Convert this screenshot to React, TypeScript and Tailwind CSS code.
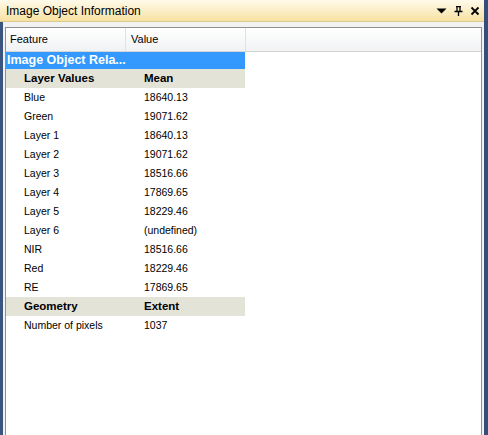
import React from "react";

const rows: [string, string][] = [
  ["Blue", "18640.13"],
  ["Green", "19071.62"],
  ["Layer 1", "18640.13"],
  ["Layer 2", "19071.62"],
  ["Layer 3", "18516.66"],
  ["Layer 4", "17869.65"],
  ["Layer 5", "18229.46"],
  ["Layer 6", "(undefined)"],
  ["NIR", "18516.66"],
  ["Red", "18229.46"],
  ["RE", "17869.65"],
];

function Category({ a, b }: { a: string; b: string }) {
  return (
    <div className="flex h-[19px] w-[239px] items-center bg-[#e4e3d8] text-[11.5px] font-bold text-black">
      <div className="w-[120px] pl-[18px]">{a}</div>
      <div className="pl-[18px]">{b}</div>
    </div>
  );
}

function Row({ a, b }: { a: string; b: string }) {
  return (
    <div className="flex h-[19px] w-[239px] items-center text-[10.5px] text-black">
      <div className="w-[120px] pl-[18px]">{a}</div>
      <div className="pl-[18px]">{b}</div>
    </div>
  );
}

export default function App() {
  return (
    <div
      className="flex h-[435px] w-[488px] overflow-hidden bg-white"
      style={{ fontFamily: '"Liberation Sans", Arial, sans-serif' }}
    >
      <div className="flex min-w-0 flex-1 flex-col">
        <div className="flex h-[22px] shrink-0 items-center justify-between border-b border-[#d8c98e] bg-gradient-to-b from-[#fffaea] to-[#f8e2a2] pl-[6px] pr-[4px]">
          <span className="text-[12px] text-black">Image Object Information</span>
          <div className="flex items-center gap-[7px] text-black">
            <svg width="11" height="6" viewBox="0 0 11 6">
              <path d="M0.5 0.5 H10.5 L5.5 5.5 Z" fill="#000" />
            </svg>
            <svg width="9" height="10" viewBox="0 0 9 10">
              <path d="M2 0.5 H7 M3 0.5 V5 M6 0.5 V5 M0.5 5.5 H8.5 M4.5 5.5 V10" stroke="#000" strokeWidth="1.3" fill="none" />
            </svg>
            <svg width="10" height="10" viewBox="0 0 10 10">
              <path d="M1.5 1.5 L8.5 8.5 M8.5 1.5 L1.5 8.5" stroke="#000" strokeWidth="1.8" />
            </svg>
          </div>
        </div>
        <div className="flex flex-1">
          <div className="w-[3px] shrink-0 bg-[#3a5680]" />
          <div className="flex flex-1 bg-[#f2f2f2] pl-[2px] pr-[2px] pt-[5px]">
            <div className="flex flex-1 flex-col border border-b-0 border-[#8e9096] bg-white">
              <div className="flex h-[24px] shrink-0 items-center border-b border-[#d5d5d5] bg-gradient-to-b from-white to-[#f1f2f4] text-[11px] text-black">
                <div className="flex h-full w-[120px] items-center border-r border-[#dfe1e5] pl-[4px]">Feature</div>
                <div className="flex h-full w-[120px] items-center border-r border-[#dfe1e5] pl-[5px]">Value</div>
              </div>
              <div className="flex h-[17px] w-[239px] items-center bg-[#3399ff] pl-[1px] text-[12.5px] font-bold text-white">
                Image Object Rela...
              </div>
              <Category a="Layer Values" b="Mean" />
              {rows.map(([a, b]) => (
                <Row key={a} a={a} b={b} />
              ))}
              <Category a="Geometry" b="Extent" />
              <Row a="Number of pixels" b="1037" />
            </div>
          </div>
        </div>
      </div>
      <div className="w-[4px] shrink-0 bg-[#34507a]" />
    </div>
  );
}
